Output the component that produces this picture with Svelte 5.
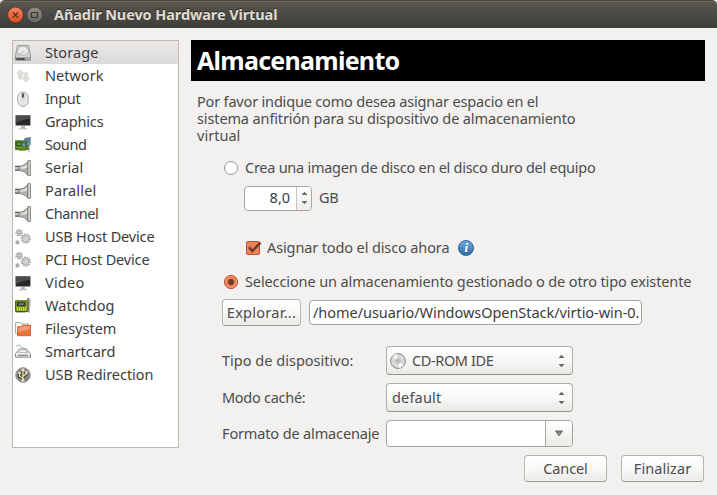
<script>
  const items = [
    ['Storage', 'disk', 53], ['Network', 'net', 58], ['Input', 'mouse', 35],
    ['Graphics', 'screen', 58], ['Sound', 'sound', 41], ['Serial', 'plug', 38],
    ['Parallel', 'plug', 51], ['Channel', 'plug', 53], ['USB Host Device', 'gears', 109],
    ['PCI Host Device', 'gears', 104], ['Video', 'screen', 39], ['Watchdog', 'card', 69],
    ['Filesystem', 'folder', 71], ['Smartcard', 'reader', 70], ['USB Redirection', 'usb', 108]
  ];
  let selected = $state(0);
  let source = $state('existing');
  let allocate = $state(true);

  // Spreads the glyphs so that a label occupies the given width.
  function fit(node, width) {
    const natural = node.getBoundingClientRect().width;
    const count = node.textContent.length;
    node.style.letterSpacing = `${(width + 0.4 - natural) / count}px`;
  }
</script>

{#snippet label(text, width)}<span class="label" use:fit={width}>{text}</span>{/snippet}

{#snippet arrows()}
  <svg class="arrows" width="7" height="14" viewBox="0 0 7 14"><path d="M.5 4 3.5.8 6.5 4zM.5 10h6l-3 3.2z" fill="#686763" /></svg>
{/snippet}

{#snippet gear(x, y, r)}
  <g transform="translate({x} {y})" fill="none" stroke="#a3a3a3">
    <circle r={r} stroke-width="1.6" stroke-dasharray="1.5 1.1" />
    <circle r={r - 0.9} fill="#dcdcdc" stroke-width=".9" />
    <circle r={r * 0.35} fill="#fff" stroke-width=".8" />
  </g>
{/snippet}

{#snippet icon(kind)}
  <svg class="icon" width="16" height="16" viewBox="0 0 16 16">
    {#if kind === 'disk'}
      <path d="M2.4.5h11.2L15.5 11v4.2H.5V11z" fill="#d0d0ce" stroke="#9b9b98" />
      <ellipse cx="8" cy="5.8" rx="5.2" ry="4.3" fill="#ececeb" stroke="#b5b5b3" stroke-width=".8" />
      <path d="M4 10.2 8.6 6.4l1 1.1" fill="none" stroke="#aaa" />
      <path d="M.5 11.3h15v4H.5z" fill="#8a8a88" />
      <path d="M1 11.8h14" stroke="#eee" />
      <path d="M1.6 14h8" stroke="#222" stroke-width="1.5" stroke-dasharray="1.2 .4" />
      <path d="M11 14h4" stroke="#c8c8c8" />
    {:else if kind === 'net'}
      <path d="M5.3 1.5 9 5.4H7.2V11H3.6V5.4H1.8z" fill="#dfddd8" stroke="#d2d0cb" stroke-width=".6" />
      <path d="M11 14.2 7.3 10.3h1.8V4.8h3.6v5.5h1.8z" fill="#dfddd8" stroke="#d2d0cb" stroke-width=".6" />
    {:else if kind === 'mouse'}
      <rect x="2.7" y="1" width="10.6" height="14.4" rx="5.3" fill="#e6e6e5" stroke="#aaa" />
      <path d="M3.5 7.5q4.5 2 9 0" fill="none" stroke="#c5c5c5" stroke-width=".7" />
      <path d="M5 4q-1 3-.8 5" fill="none" stroke="#fff" />
      <rect x="6.8" y="2.3" width="2.4" height="4.4" rx="1.2" fill="#555" />
    {:else if kind === 'screen'}
      <rect x=".3" y="1" width="15.4" height="11" fill="#b5b5b5" />
      <rect x=".8" y="1.6" width="14.4" height="9.6" fill="#252728" />
      <path d="M.8 1.6h14.4v2.8Q8 5 .8 9z" fill="#4b4e4f" />
      <path d="M6 12h4v2.2H6z" fill="#b5b5b5" /><path d="M4 14h8v1.4H4z" fill="#c4c4c4" />
    {:else if kind === 'sound'}
      <path d="M.4 3.8h13.4v8.8H.4z" fill="#4d7f22" stroke="#315d0d" stroke-width=".8" />
      <path d="M2.3 5.5h3.4v3H2.3z" fill="#87a66b" stroke="#2b4c13" /><path d="M1.5 10.5h9" stroke="#729b46" />
      <path d="M4 12.8h7V14H4z" fill="#b7a437" /><path d="M14 4v11.5" stroke="#aaa" stroke-width="1.1" />
      <path d="M10 7.5V1.8L15 .8v5.5M10 3.4l5-1" fill="none" stroke="#476f91" stroke-width="1.2" />
      <ellipse cx="8.9" cy="7.9" rx="1.7" ry="1.3" fill="#86aac7" stroke="#315c80" stroke-width=".6" /><ellipse cx="13.7" cy="6.8" rx="1.7" ry="1.3" fill="#86aac7" stroke="#315c80" stroke-width=".6" />
    {:else if kind === 'plug'}
      <path d="M0 6.5h4v3.7H0z" fill="#c4c4c0" /><path d="M0 6.3h4.3M0 10.2h4.3" stroke="#555550" stroke-width="1.2" />
      <path d="M4 6.3Q9.5 6 12.7 1.6v13.2Q9.5 10.6 4 10.3z" fill="#b3b4af" stroke="#777873" stroke-width=".9" />
      <path d="M5 7.5q4.5-.3 7.3-3.5v3.8Q9.3 9 5 8.8z" fill="#dfdfdb" />
      <path d="M12.9.6h2.5v14.8h-2.5z" fill="#dfe0dc" stroke="#777874" stroke-width=".9" />
    {:else if kind === 'gears'}
      {@render gear(4.1, 3.7, 3)}{@render gear(10.8, 9.6, 4.3)}
      <path d="M.8 11.8 4.2 15.2M4.2 11.8.8 15.2M2.5 11.3v4.2M.4 13.5h4.2" stroke="#aaa" stroke-width="1.1" />
    {:else if kind === 'card'}
      <path d="M.6 2.8h12.2v10.6H.6z" fill="#8eaa22" stroke="#46590b" />
      <path d="M2.2 4.4h8v3.5h-8z" fill="#4d5a49" stroke="#232b20" stroke-width=".8" /><path d="M4 6.1h4.5" stroke="#8c9681" />
      <path d="M2.5 9v4M4.5 9v4M6.5 9v4M8.5 9v4M10.5 9v4" stroke="#c1d741" />
      <path d="M1.5 13.9h10" stroke="#454315" stroke-width="1.2" stroke-dasharray="1.5 .5" />
      <path d="M12 1h1.8v13.5" fill="none" stroke="#777" stroke-width="1.4" /><path d="M15 1.5v7" stroke="#aaa" />
    {:else if kind === 'folder'}
      <path d="M.5 12.5v-11h5l1 1.5h7v9.5z" fill="#fff" stroke="#aaa" />
      <path d="M2.5 14.7V5.8H6l1.5-1.5h8v10.4z" fill="#e8743f" stroke="#d2622f" />
      <path d="M3.3 6.6h3l1.5-1.5h7V8.5l-11.5 2.5z" fill="#f5a581" opacity=".8" />
    {:else if kind === 'reader'}
      <path d="M1 2.2 4 .8q2 3 8 4.8" fill="none" stroke="#aaa" />
      <path d="M.5 9.5 4.5 5h7l4 4.5v3.7H.5z" fill="#dedfdd" stroke="#8f8f8f" />
      <path d="M4.8 5.8h6L12 8.5H3.5z" fill="#f0f0f0" stroke="#aaa" stroke-width=".7" />
      <path d="M1 10h14" stroke="#fff" /><path d="M3 11.3h10" stroke="#888" stroke-width="1.2" />
    {:else}
      <circle cx="8" cy="8" r="7.4" fill="#858681" stroke="#a9a9a7" />
      <path d="M8 13.8V3M8 11.5 4.4 9.4V6M8 9.2l3.5-1.8V5" fill="none" stroke="#393936" stroke-width="2.7" />
      <path d="M8 13.6V3M8 11.2 4.5 9.2V6M8 9l3.5-1.8V5" fill="none" stroke="#ece3ae" stroke-width="1.3" />
      <path d="M8 .8 5.9 4h4.2z" fill="#ece3ae" /><circle cx="8" cy="13.1" r="1.6" fill="#ece3ae" /><circle cx="4.5" cy="6" r="1.3" fill="#ece3ae" /><path d="M10.3 4.2h2.4v2.3h-2.4z" fill="#ece3ae" />
    {/if}
  </svg>
{/snippet}

{#snippet radio(value)}
  <svg class="radio" width="16" height="16" viewBox="0 0 16 16">
    {#if source === value}
      <circle cx="8" cy="8" r="6.6" fill="#ef7b50" stroke="#b75331" />
      <circle cx="8" cy="8" r="5.5" fill="none" stroke="#f6a27e" stroke-width=".8" />
      <circle cx="8" cy="8" r="2.9" fill="#6b3b2b" />
    {:else}
      <circle cx="8" cy="8" r="6.5" fill="#fff" stroke="#96958e" />
    {/if}
  </svg>
{/snippet}

<div class="window">
  <header>
    <svg width="44" height="20" viewBox="0 0 44 20">
      <defs>
        <linearGradient id="close" x2="0" y2="1"><stop stop-color="#f58864" /><stop offset="1" stop-color="#dd4a1c" /></linearGradient>
        <linearGradient id="maximize" x2="0" y2="1"><stop stop-color="#918f87" /><stop offset="1" stop-color="#66655e" /></linearGradient>
      </defs>
      <circle cx="11.5" cy="10" r="7.9" fill="url(#close)" stroke="#33322d" stroke-width=".7" />
      <path d="m8.9 7.4 5.2 5.2m0-5.2-5.2 5.2" stroke="#592a1b" stroke-width="1.3" />
      <circle cx="30.7" cy="10" r="7.9" fill="url(#maximize)" stroke="#33322d" stroke-width=".7" />
      <path d="M27.5 7.5h6v5h-6z" fill="none" stroke="#3a3934" stroke-width="1.2" />
    </svg>
    <strong>{@render label('Añadir Nuevo Hardware Virtual', 223)}</strong>
  </header>

  <div class="body">
    <nav>
      {#each items as [name, kind, width], i}
        <button class="item" class:active={selected === i} onclick={() => (selected = i)}>
          {@render icon(kind)}{@render label(name, width)}
        </button>
      {/each}
    </nav>

    <main>
      <h1>{@render label('Almacenamiento', 202)}</h1>
      <div class="intro">
        <div>{@render label('Por favor indique como desea asignar espacio en el', 341)}</div>
        <div>{@render label('sistema anfitrión para su dispositivo de almacenamiento', 378)}</div>
        <div>{@render label('virtual', 43)}</div>
      </div>

      <button class="row option" onclick={() => (source = 'new')}>
        {@render radio('new')}{@render label('Crea una imagen de disco en el disco duro del equipo', 350)}
      </button>
      <div class="row size">
        <div class="spin"><span class="value">{@render label('8,0', 20)}</span><span class="step">{@render arrows()}</span></div>
        {@render label('GB', 19)}
      </div>
      <button class="row allocate" onclick={() => (allocate = !allocate)}>
        <svg width="17" height="16" viewBox="0 0 17 16">
          <rect x="1.5" y="1.5" width="13" height="13" rx="1.5" fill={allocate ? '#f08156' : '#fff'} stroke="#b45635" />
          {#if allocate}<path d="M4 7.3 7.3 11 15.5 2.6" fill="none" stroke="#6b3b29" stroke-width="2.4" />{/if}
        </svg>
        {@render label('Asignar todo el disco ahora', 182)}
        <span class="info">i</span>
      </button>
      <button class="row option managed" onclick={() => (source = 'existing')}>
        {@render radio('existing')}{@render label('Seleccione un almacenamiento gestionado o de otro tipo existente', 446)}
      </button>
      <div class="row browse">
        <button class="push explore">{@render label('Explorar...', 69)}</button>
        <div class="entry">{@render label('/home/usuario/WindowsOpenStack/virtio-win-0.', 326)}</div>
      </div>

      <div class="row field">
        <span class="name">{@render label('Tipo de dispositivo:', 131)}</span>
        <div class="combo">
          <svg class="cd" width="16" height="16" viewBox="0 0 16 16">
            <circle cx="8" cy="8" r="7.4" fill="#d9d9d7" stroke="#858583" />
            <path d="M8 8 2.5 3.5A7 7 0 0 1 7 1zM8 8l5.5 4.5A7 7 0 0 1 9 15z" fill="#f7f7f7" />
            <circle cx="8" cy="8" r="2.2" fill="#eee" stroke="#999" stroke-width=".8" /><circle cx="8" cy="8" r=".8" fill="#fff" stroke="#777" stroke-width=".6" />
          </svg>
          {@render label('CD-ROM IDE', 81)}{@render arrows()}
        </div>
      </div>
      <div class="row field">
        <span class="name">{@render label('Modo caché:', 83)}</span>
        <div class="combo">{@render label('default', 49)}{@render arrows()}</div>
      </div>
      <div class="row field format">
        <span class="name">{@render label('Formato de almacenaje', 157)}</span>
        <div class="combo editable"><span class="drop"><svg width="10" height="7" viewBox="0 0 10 7"><path d="M1.5 1h7L5 5.8z" fill="#8d8b87" stroke="#65635f" /></svg></span></div>
      </div>
      <footer>
        <button class="push">{@render label('Cancel', 44)}</button>
        <button class="push">{@render label('Finalizar', 57)}</button>
      </footer>
    </main>
  </div>
</div>

<style>
  :global(body) { margin: 0; background: #f2f1f0; }
  * { box-sizing: border-box; }
  svg { display: block; flex: none; }
  button { font: inherit; color: inherit; padding: 0; border: 0; background: none; text-align: left; }
  .window { width: 717px; height: 495px; overflow: hidden; background: #f2f1f0; color: #4c4c4c; font: 14.5px/20px "Noto Sans", "Open Sans", sans-serif; }
  .label { display: inline-block; white-space: pre; flex: none; }
  .item .label, .row > .label, .push .label, .combo .label, .name, header strong { margin-bottom: 2px; }
  header { height: 28px; padding: 0 0 0 4px; display: flex; align-items: center; background: linear-gradient(#59574f, #3d3c38); border-top: 1px solid #4a4943; box-shadow: inset 0 1px #6a685f; border-radius: 5px 5px 0 0; }
  header strong { margin-left: 6px; color: #dfdbd2; text-shadow: 0 -1px #2b2a27; }
  .body { display: flex; padding: 12px 12px 0; }
  nav { width: 167px; height: 408px; border: 1px solid #bdb9b1; background: #fff; color: #3c3c3c; }
  .item { display: flex; align-items: center; width: 100%; height: 23px; padding-left: 2px; gap: 14px; }
  .item.active { background: linear-gradient(#ebeae9, #dcdbd9); }
  main { width: 514px; margin-left: 12px; }
  h1 { margin: 0; height: 41px; padding-left: 6px; background: #000; color: #fff; font-size: 25px; line-height: 40px; font-weight: 700; }
  .intro { margin: 12px 0 14px 6px; line-height: 17px; }
  .intro div { height: 17px; }
  .row { display: flex; align-items: center; }
  .option { height: 20px; padding-left: 32px; gap: 6px; }
  .size { height: 26px; margin-top: 7px; padding-left: 53px; gap: 7px; }
  .spin { display: flex; width: 68px; height: 25px; border: 1px solid #aaa69f; border-radius: 4px; background: #fff; overflow: hidden; color: #3c3c3c; }
  .value { width: 51px; padding-right: 6px; text-align: right; line-height: 20px; }
  .step { display: flex; align-items: center; justify-content: center; flex: 1; border-left: 1px solid #c8c5c0; background: linear-gradient(#fff, #eeedeb); }
  .allocate { height: 20px; margin-top: 27px; padding-left: 54px; }
  .allocate .label { margin-left: 5px; }
  .info { width: 16px; height: 16px; margin-left: 9px; border-radius: 8px; border: 1px solid #2c649b; background: linear-gradient(#73a8d7, #306ba4); color: #fff; text-align: center; font: italic bold 13px/14px "Liberation Serif", serif; }
  .managed { margin-top: 14px; }
  .browse { height: 27px; margin: 7px 0 20px; padding-left: 31px; gap: 8px; }
  .push { display: flex; align-items: center; justify-content: center; width: 83px; height: 27px; border: 1px solid #b6b3ad; border-bottom-color: #999790; border-radius: 4px; background: linear-gradient(#fff, #f8f8f7 50%, #ebeae8); box-shadow: inset 0 0 0 1px #ffffff80; }
  .explore { width: 79px; }
  .entry { width: 333px; height: 25px; border: 1px solid #a5a29b; border-radius: 4px; background: #fff; padding-left: 3px; line-height: 22px; color: #3c3c3c; overflow: hidden; }
  .field { height: 29px; margin-bottom: 8px; padding-left: 31px; }
  .name { width: 164px; }
  .combo { display: flex; align-items: center; width: 187px; height: 100%; padding: 0 7px 0 5px; border: 1px solid #b2aea8; border-bottom-color: #95928c; border-radius: 4px; background: linear-gradient(#fff, #f7f7f6 55%, #e9e8e6); }
  .cd { margin: 0 6px 0 -2px; }
  .combo .arrows { margin-left: auto; }
  .format { height: 27px; }
  .editable { padding: 0; background: #fff; border-color: #a5a29b; overflow: hidden; }
  .drop { margin-left: auto; width: 27px; height: 100%; display: flex; align-items: center; justify-content: center; border-left: 1px solid #aaa79f; background: linear-gradient(#fff, #ecebe9); }
  footer { display: flex; justify-content: flex-end; gap: 14px; padding-right: 1px; }
</style>
